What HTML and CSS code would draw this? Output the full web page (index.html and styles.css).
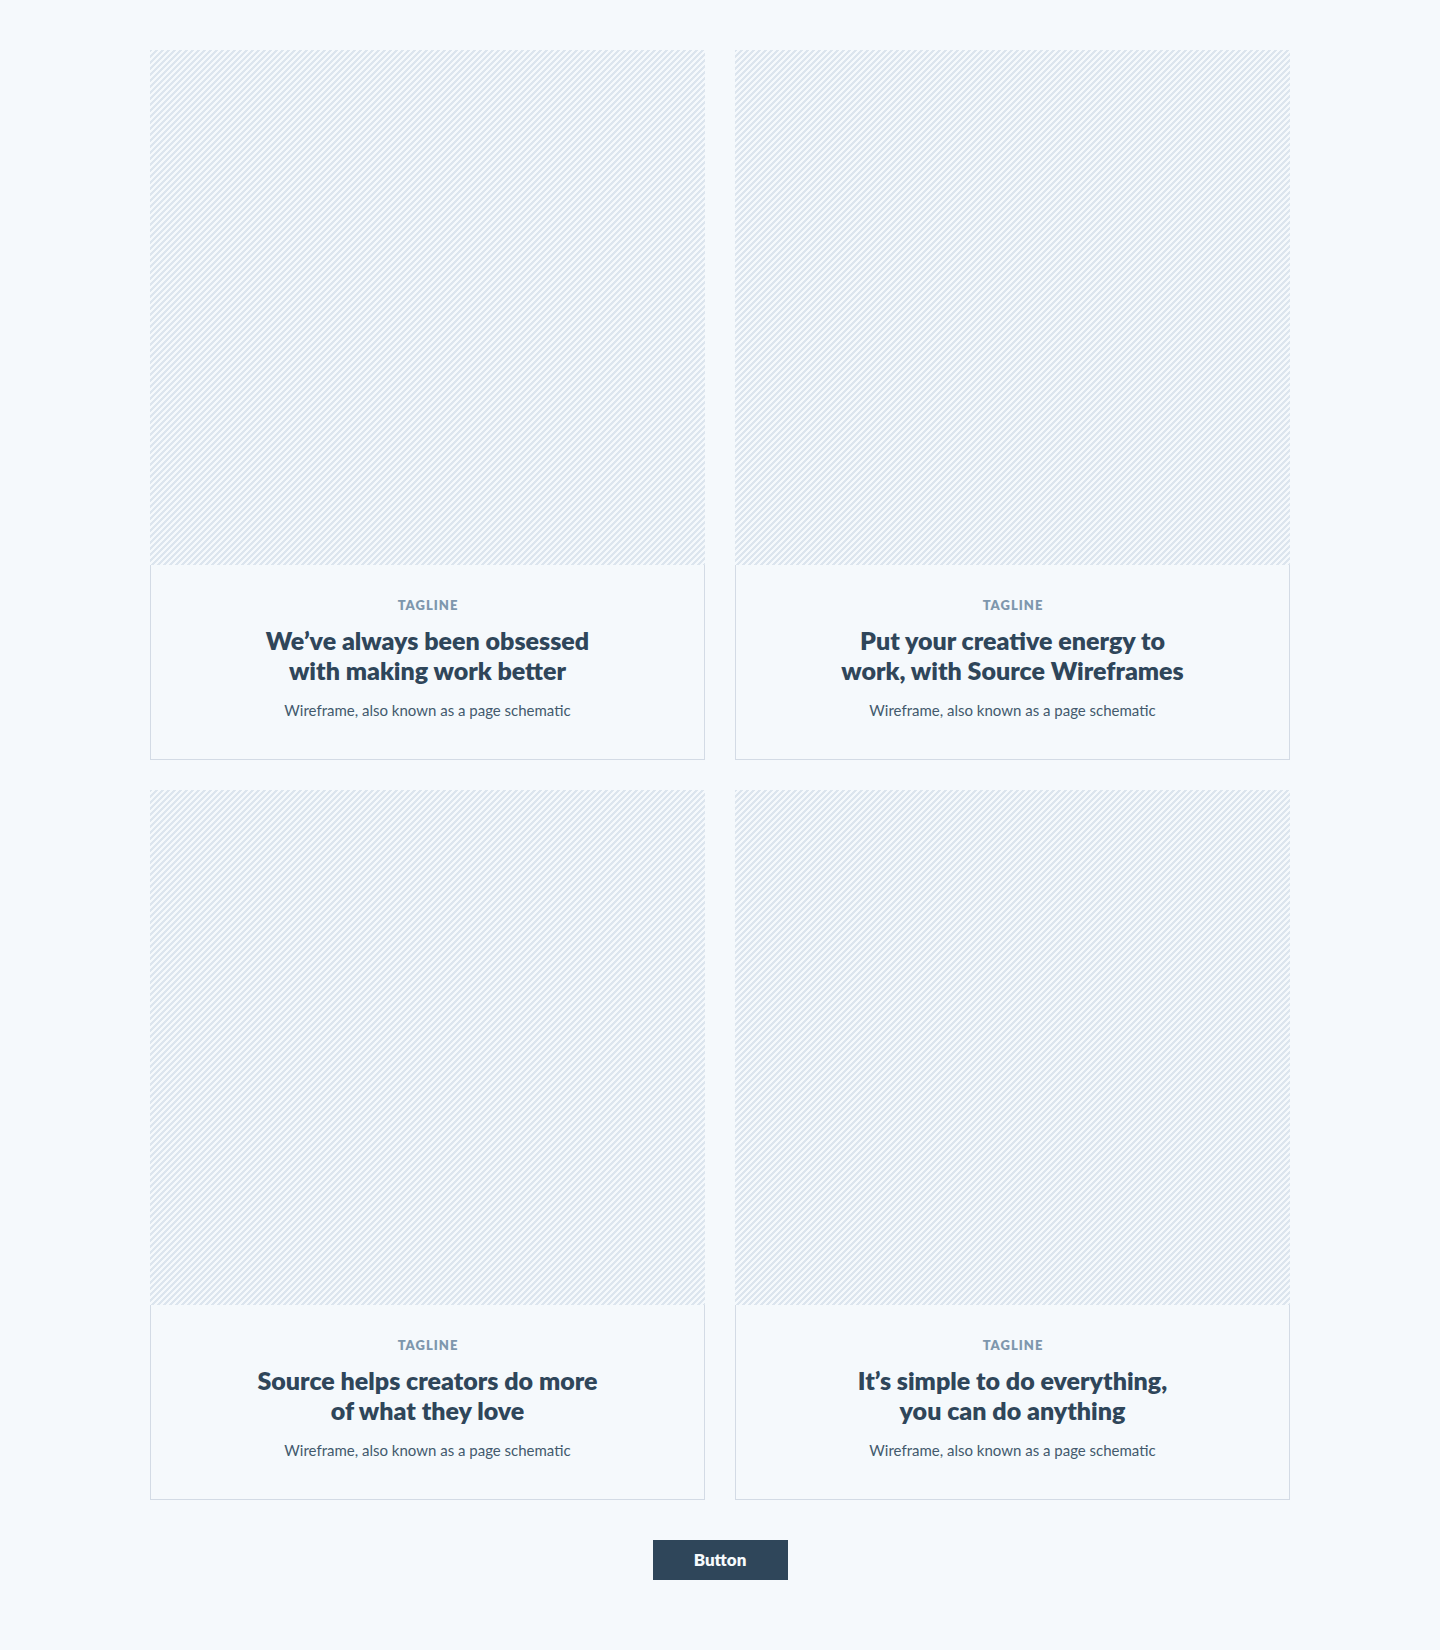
FILE: index.html
```html
<!DOCTYPE html>
<html lang="en">
<head>
<meta charset="utf-8">
<title>Source Wireframes</title>
<link rel="stylesheet" href="styles.css">
</head>
<body>
<main class="page">
  <section class="grid">
    <article class="card">
      <div class="media"></div>
      <div class="body">
        <p class="tagline">TAGLINE</p>
        <h2 class="title">We’ve always been obsessed<br>with making work better</h2>
        <p class="text">Wireframe, also known as a page schematic</p>
      </div>
    </article>
    <article class="card">
      <div class="media"></div>
      <div class="body">
        <p class="tagline">TAGLINE</p>
        <h2 class="title">Put your creative energy to<br>work, with Source Wireframes</h2>
        <p class="text">Wireframe, also known as a page schematic</p>
      </div>
    </article>
    <article class="card">
      <div class="media"></div>
      <div class="body">
        <p class="tagline">TAGLINE</p>
        <h2 class="title">Source helps creators do more<br>of what they love</h2>
        <p class="text">Wireframe, also known as a page schematic</p>
      </div>
    </article>
    <article class="card">
      <div class="media"></div>
      <div class="body">
        <p class="tagline">TAGLINE</p>
        <h2 class="title">It’s simple to do everything,<br>you can do anything</h2>
        <p class="text">Wireframe, also known as a page schematic</p>
      </div>
    </article>
  </section>
  <button class="button" type="button">Button</button>
</main>
</body>
</html>
```
FILE: styles.css
```css
* {
  box-sizing: border-box;
}

body {
  margin: 0;
  min-height: 1650px;
  background: #f5f9fc;
  color: #2f465a;
  font-family: Lato, Carlito, sans-serif;
}

.page {
  display: flex;
  flex-direction: column;
  align-items: center;
  gap: 40px;
  padding: 50px 0 70px;
}

.grid {
  display: grid;
  grid-template-columns: 555px 555px;
  gap: 30px;
}

.card {
  height: 710px;
  text-align: center;
}

.media {
  height: 515px;
  background: repeating-linear-gradient(135deg, #dce5ee 0 1.4px, #f5f9fc 2.1px 3.5px, #dce5ee 4.2px 4.243px);
}

.body {
  height: 195px;
  padding: 30px 20px;
  border: 1px solid #d3dbe5;
  border-top: 0;
}

.tagline {
  margin: 0;
  padding-left: 1px;
  color: #7e97ad;
  font-size: 13px;
  font-weight: 800;
  line-height: 20px;
  letter-spacing: 1px;
}

.title {
  margin: 10px 0 0;
  font-size: 25px;
  font-weight: 800;
  line-height: 30px;
}

.text {
  margin: 15px 0 0;
  color: #435a6d;
  font-size: 15px;
  line-height: 20px;
}

.button {
  width: 135px;
  height: 40px;
  padding: 0;
  border: 0;
  background: #2f465a;
  color: #f6fafd;
  font: 800 17px/40px Lato, Carlito, sans-serif;
}
```
